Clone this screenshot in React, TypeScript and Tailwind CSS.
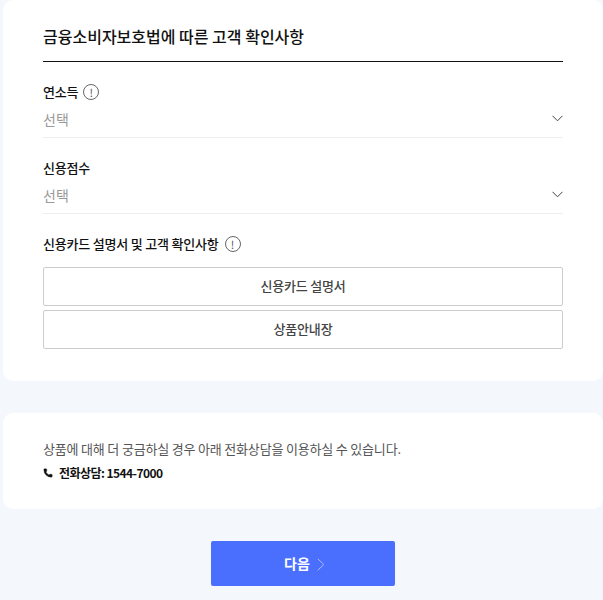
import React from 'react';
import { Phone } from 'lucide-react';

const fontStack = "font-['Noto_Sans_CJK_KR','Noto_Sans',sans-serif]";

const InfoIcon = () => (
  <span className="flex h-[16px] w-[16px] items-center justify-center rounded-full border border-[#666] text-[11px] font-normal leading-none text-[#555]">
    !
  </span>
);

const Chevron = () => (
  <svg width="11" height="7" viewBox="0 0 11 7" fill="none" className="mb-[2px]">
    <path d="M0.5 0.8 L5.5 5.8 L10.5 0.8" stroke="#444" strokeWidth="1" />
  </svg>
);

const SelectField = ({ label, info }: { label: string; info?: boolean }) => (
  <div>
    <div className="flex h-[20px] items-center gap-[5px] text-[13px] font-medium tracking-[-0.2px] text-[#111]">
      {label}
      {info && <InfoIcon />}
    </div>
    <div className="mt-[3px] flex h-[33px] items-center justify-between border-b border-[#eeeeee] pb-[4px] text-[14px] text-[#999]">
      <span>선택</span>
      <Chevron />
    </div>
  </div>
);

const DocButton = ({ label }: { label: string }) => (
  <button className="h-[39px] w-full rounded-[2px] border border-[#cccccc] bg-white pb-[2px] text-[13px] font-medium tracking-[-0.2px] text-[#444]">
    {label}
  </button>
);

export default function App() {
  return (
    <div className={`h-[600px] w-[603px] overflow-hidden bg-[#f4f7fb] pl-[3px] ${fontStack}`}>
      <section className="h-[381px] rounded-[10px] bg-white pl-[40px] pr-[40px] pt-[24px]">
        <h2 className="h-[38px] border-b border-[#111] text-[16px] font-medium leading-[24px] text-[#111]">
          금융소비자보호법에 따른 고객 확인사항
        </h2>
        <div className="mt-[20px] flex flex-col gap-[20px]">
          <SelectField label="연소득" info />
          <SelectField label="신용점수" />
        </div>
        <div className="mt-[20px] flex h-[20px] items-center gap-[6px] text-[13px] font-medium tracking-[-0.2px] text-[#111]">
          신용카드 설명서 및 고객 확인사항
          <InfoIcon />
        </div>
        <div className="mt-[13px] flex flex-col gap-[4px]">
          <DocButton label="신용카드 설명서" />
          <DocButton label="상품안내장" />
        </div>
      </section>

      <section className="mt-[32px] h-[96px] rounded-[10px] bg-white pl-[40px] pr-[40px] pt-[26px]">
        <p className="text-[13px] leading-[20px] tracking-[-0.18px] text-[#555]">
          상품에 대해 더 궁금하실 경우 아래 전화상담을 이용하실 수 있습니다.
        </p>
        <p className="mt-[4px] flex items-center gap-[6px] text-[12px] font-bold leading-[20px] tracking-[-0.55px] text-[#111]">
          <Phone size={10} fill="#111" strokeWidth={1} />
          전화상담: 1544-7000
        </p>
      </section>

      <div className="mt-[32px] flex justify-center pr-[3px] pl-[2px]">
        <button className="flex h-[45px] w-[184px] items-center justify-center gap-[7px] rounded-[2px] bg-[#4a6fff] pl-[4px] text-[14px] font-bold text-white">
          다음
          <svg width="8" height="13" viewBox="0 0 8 13" fill="none" className="mt-[1px]">
            <path d="M0.8 0.8 L6.8 6.5 L0.8 12.2" stroke="#a9b9ff" strokeWidth="1" />
          </svg>
        </button>
      </div>
    </div>
  );
}
